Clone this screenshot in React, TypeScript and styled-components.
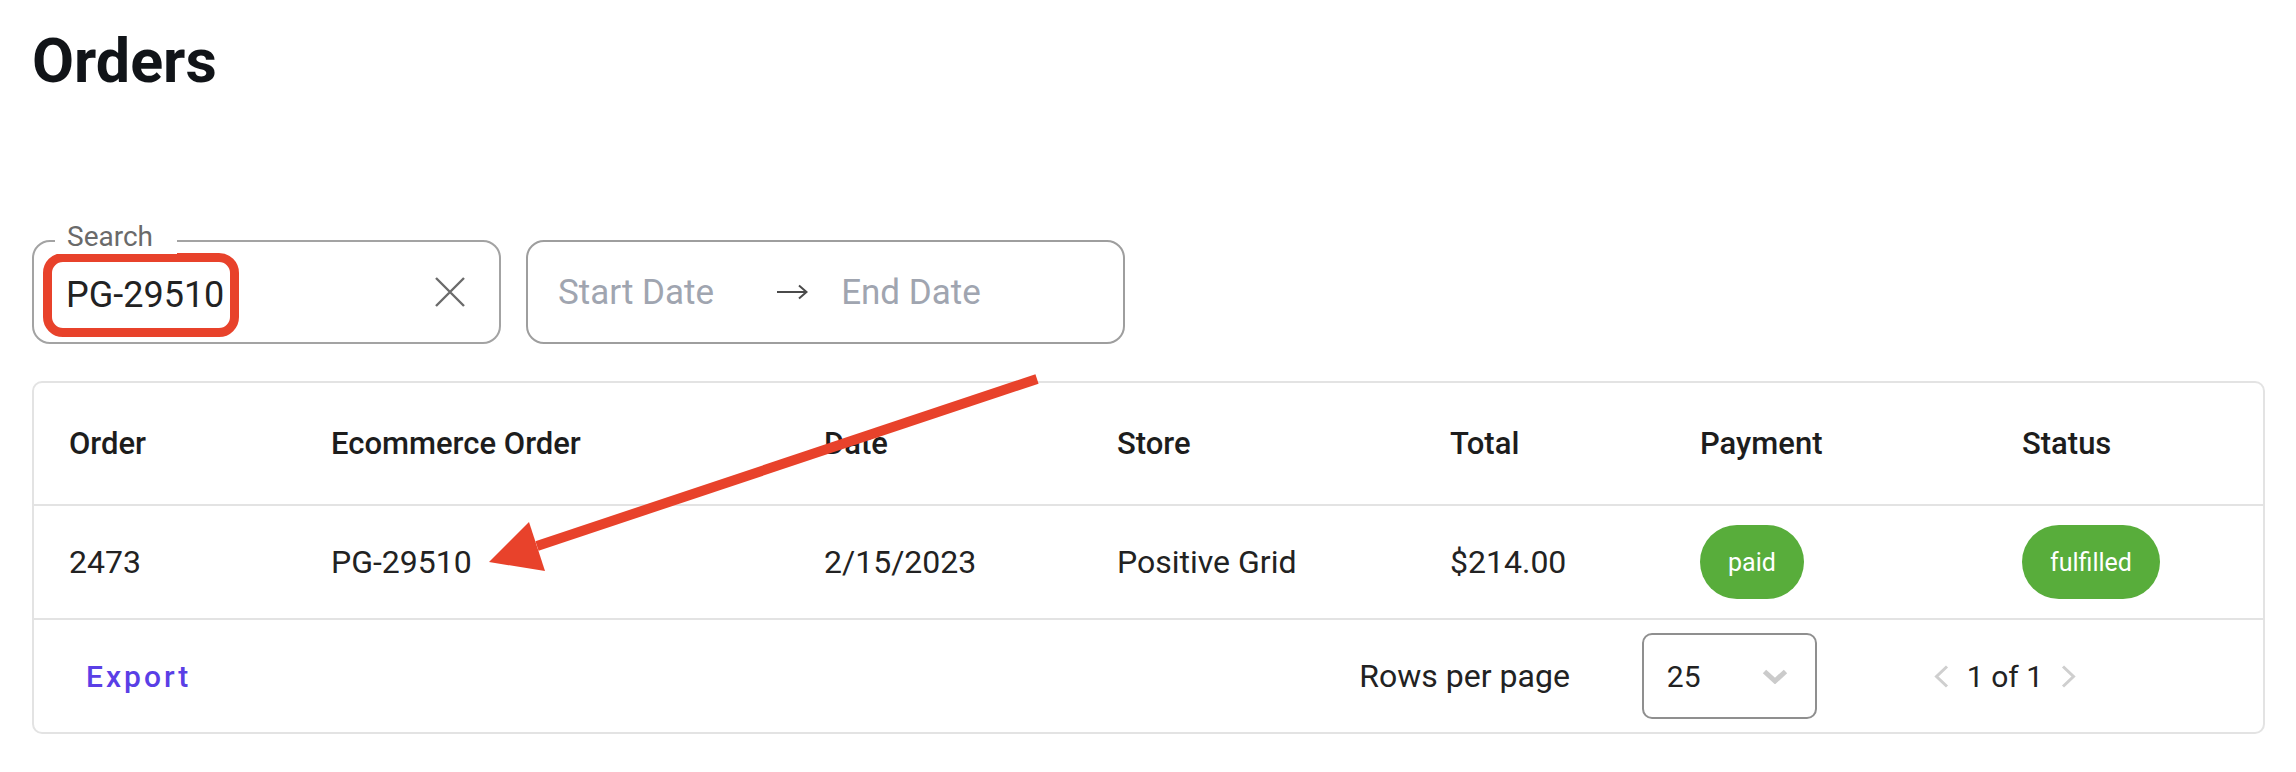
import React from "react";
import styled, { createGlobalStyle } from "styled-components";

const GlobalStyle = createGlobalStyle`
  html, body { margin: 0; padding: 0; background: #ffffff; }
  body {
    font-family: Roboto, "Noto Sans", "Liberation Sans", Arial, sans-serif;
    -webkit-font-smoothing: antialiased;
  }
  *, *::before, *::after { box-sizing: border-box; }
`;

const Page = styled.div`
  position: relative;
  width: 2296px;
  height: 772px;
  padding: 24px 31px 0 32px;
  overflow: hidden;
  background: #ffffff;
`;

const Title = styled.h1`
  margin: 0;
  font-size: 61px;
  line-height: 75px;
  font-weight: 700;
  color: #111418;
`;

const Filters = styled.div`
  display: flex;
  gap: 25px;
  margin-top: 141px;
  height: 104px;
`;

const SearchField = styled.div`
  position: relative;
  width: 469px;
  border: 2px solid #a3a3a3;
  border-radius: 18px;
  display: flex;
  align-items: center;
  padding: 0 34px 0 9px;
`;

const FloatingLabel = styled.span`
  position: absolute;
  top: -22px;
  left: 21px;
  padding: 0 24px 0 12px;
  background: #ffffff;
  font-size: 28px;
  line-height: 34px;
  color: #6a6a6a;
`;

const Highlight = styled.span`
  display: inline-flex;
  align-items: center;
  height: 84px;
  margin-top: 6px;
  padding: 0 6px 0 14px;
  border: 9px solid #e8422b;
  border-radius: 20px;
  font-size: 36px;
  color: #222222;
`;

const ClearButton = styled.span`
  margin-left: auto;
  display: flex;
  width: 30px;
  height: 30px;
`;

const DateField = styled.div`
  width: 599px;
  border: 2px solid #9e9e9e;
  border-radius: 18px;
  display: flex;
  align-items: center;
  padding-left: 30px;
  font-size: 35px;
  color: #a0a5b0;
`;

const DateArrow = styled.span`
  display: flex;
  margin: 0 33px 0 63px;
  width: 31px;
  height: 16px;
`;

const Card = styled.div`
  margin-top: 37px;
  border: 2px solid #e3e3e3;
  border-radius: 10px;
`;

const Row = styled.div<{ $h: number }>`
  display: grid;
  grid-template-columns: 262px 493px 293px 333px 250px 322px 1fr;
  align-items: center;
  height: ${(p) => p.$h}px;
  border-bottom: 2px solid #e3e3e3;
`;

const HeadCell = styled.div`
  padding-left: 35px;
  font-size: 31px;
  font-weight: 500;
  color: #1d1d1d;
`;

const Cell = styled.div`
  padding-left: 35px;
  font-size: 32px;
  color: #222222;
`;

const Badge = styled.span`
  display: inline-flex;
  align-items: center;
  justify-content: center;
  height: 74px;
  padding: 0 28px;
  border-radius: 37px;
  background: #58ad3b;
  color: #ffffff;
  font-size: 25px;
`;

const Footer = styled.div`
  display: flex;
  align-items: center;
  height: 112px;
  padding-left: 52px;
`;

const ExportButton = styled.button`
  border: none;
  background: none;
  padding: 0;
  font-family: inherit;
  font-size: 30px;
  font-weight: 500;
  letter-spacing: 3px;
  color: #5a3fe6;
  cursor: pointer;
`;

const RowsLabel = styled.span`
  margin-left: auto;
  font-size: 32px;
  color: #222222;
`;

const SelectBox = styled.div`
  margin-left: 72px;
  width: 175px;
  height: 86px;
  border: 2px solid #8f8f8f;
  border-radius: 10px;
  display: flex;
  align-items: center;
  justify-content: space-between;
  padding: 0 27px 0 23px;
  font-size: 30px;
  color: #222222;
`;

const Pager = styled.div`
  display: flex;
  align-items: center;
  gap: 18px;
  margin: 0 187px 0 117px;
  font-size: 30px;
  color: #222222;
`;

const Annotation = styled.svg`
  position: absolute;
  top: 0;
  left: 0;
  pointer-events: none;
`;

const ChevronSmall = ({ dir }: { dir: "left" | "right" }) => (
  <svg width="15" height="23" viewBox="0 0 15 23">
    <polyline
      points={dir === "left" ? "13,1.5 2.5,11.5 13,21.5" : "2,1.5 12.5,11.5 2,21.5"}
      fill="none"
      stroke="#cfcfcf"
      strokeWidth="3"
    />
  </svg>
);

const columns = ["Order", "Ecommerce Order", "Date", "Store", "Total", "Payment", "Status"];

export default function App() {
  return (
    <>
      <GlobalStyle />
      <Page>
        <Title>Orders</Title>
        <Filters>
          <SearchField>
            <FloatingLabel>Search</FloatingLabel>
            <Highlight>PG-29510</Highlight>
            <ClearButton>
              <svg width="30" height="30" viewBox="0 0 30 30">
                <path d="M1 1 L29 29 M29 1 L1 29" stroke="#6b6b6b" strokeWidth="2.4" fill="none" />
              </svg>
            </ClearButton>
          </SearchField>
          <DateField>
            <span>Start Date</span>
            <DateArrow>
              <svg width="31" height="16" viewBox="0 0 31 16">
                <path d="M0 8 H29 M22 1.5 L29.5 8 L22 14.5" stroke="#4a4a4a" strokeWidth="2" fill="none" />
              </svg>
            </DateArrow>
            <span>End Date</span>
          </DateField>
        </Filters>

        <Card>
          <Row $h={123}>
            {columns.map((c) => (
              <HeadCell key={c}>{c}</HeadCell>
            ))}
          </Row>
          <Row $h={114}>
            <Cell>2473</Cell>
            <Cell>PG-29510</Cell>
            <Cell>2/15/2023</Cell>
            <Cell>Positive Grid</Cell>
            <Cell>$214.00</Cell>
            <Cell>
              <Badge>paid</Badge>
            </Cell>
            <Cell>
              <Badge>fulfilled</Badge>
            </Cell>
          </Row>
          <Footer>
            <ExportButton>Export</ExportButton>
            <RowsLabel>Rows per page</RowsLabel>
            <SelectBox>
              <span>25</span>
              <svg width="26" height="15" viewBox="0 0 26 15">
                <polyline points="2.5,2.5 13,12 23.5,2.5" fill="none" stroke="#cbcbcb" strokeWidth="5" />
              </svg>
            </SelectBox>
            <Pager>
              <ChevronSmall dir="left" />
              <span>1 of 1</span>
              <ChevronSmall dir="right" />
            </Pager>
          </Footer>
        </Card>

        <Annotation width="2296" height="772" viewBox="0 0 2296 772">
          <line x1="1037" y1="379" x2="537" y2="546" stroke="#e8422b" strokeWidth="10" />
          <polygon points="489,562 529,522 545,571" fill="#e8422b" />
        </Annotation>
      </Page>
    </>
  );
}
